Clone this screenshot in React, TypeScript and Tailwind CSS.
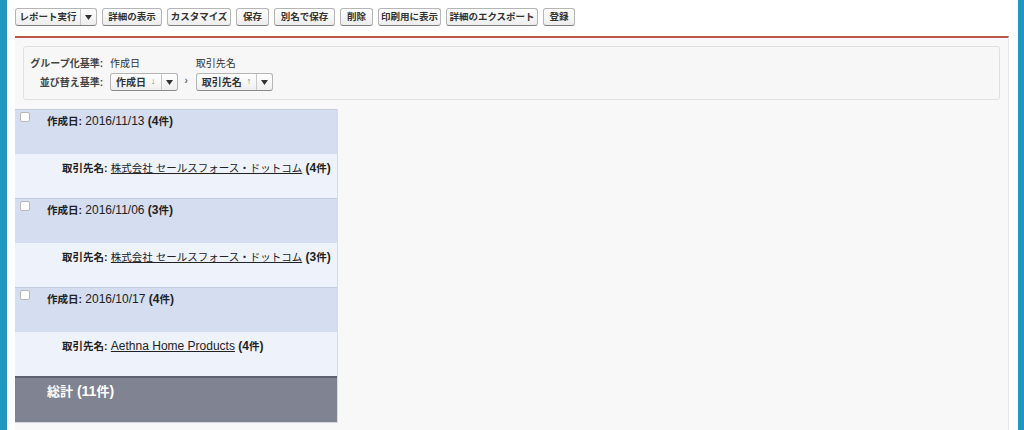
const font = { fontFamily: '"Liberation Sans", "Noto Sans CJK JP", sans-serif' };

const buttons = [
  { label: '詳細の表示', w: 'w-[60px]' },
  { label: 'カスタマイズ', w: 'w-[64px]' },
  { label: '保存', w: 'w-[33px]' },
  { label: '別名で保存', w: 'w-[61px]' },
  { label: '削除', w: 'w-[33px]' },
  { label: '印刷用に表示', w: 'w-[63px]' },
  { label: '詳細のエクスポート', w: 'w-[92px]' },
  { label: '登録', w: 'w-[32px]' },
];

const groups = [
  { date: '2016/11/13', count: 4, account: '株式会社 セールスフォース・ドットコム', jp: true },
  { date: '2016/11/06', count: 3, account: '株式会社 セールスフォース・ドットコム', jp: true },
  { date: '2016/10/17', count: 4, account: 'Aethna Home Products', jp: false },
];

function Caret() {
  return (
    <svg width="7" height="5" viewBox="0 0 7 5">
      <path d="M0 0h7L3.5 5z" fill="#333" />
    </svg>
  );
}

function SortSelect({ label, arrow }: { label: string; arrow: string }) {
  return (
    <div className="flex h-[18px] items-center rounded-[3px] border border-[#b5b5b5] border-b-[#8a8a8a] bg-gradient-to-b from-white to-[#efefef] text-[10px] font-bold text-[#333]">
      <span className="pl-[5px] pr-[5px]">{label}</span>
      <span className="pr-[5px] text-[9px] font-normal text-[#777]">{arrow}</span>
      <span className="flex h-full items-center border-l border-[#c8c8c8] px-[4px]">
        <Caret />
      </span>
    </div>
  );
}

export default function App() {
  return (
    <div className="flex h-[430px] w-full overflow-hidden bg-white" style={font}>
      <div className="w-[7px] shrink-0 bg-[#1f97be]" />
      <div className="flex min-w-0 flex-1 flex-col pl-[8px] pr-[9px] pt-[8px]">
        <div className="flex gap-[5px]">
          <div className="flex h-[18px] w-[82px] items-center whitespace-nowrap rounded-[3px] border border-[#b5b5b5] border-b-[#7f7f7f] bg-gradient-to-b from-white to-[#ededed] text-[9.5px] font-bold text-[#333]">
            <span className="flex-1 text-center">レポート実行</span>
            <span className="flex h-full items-center border-l border-[#c8c8c8] px-[4px]">
              <Caret />
            </span>
          </div>
          {buttons.map((b) => (
            <div
              key={b.label}
              className={`flex h-[18px] items-center justify-center whitespace-nowrap rounded-[3px] border border-[#b5b5b5] border-b-[#7f7f7f] bg-gradient-to-b from-white to-[#ededed] text-[9.5px] font-bold text-[#333] ${b.w}`}
            >
              {b.label}
            </div>
          ))}
        </div>

        <div className="mt-[10px] flex flex-1 flex-col border-t-2 border-r border-t-[#b9574b] border-r-[#e6e6e6] bg-[#f8f8f8]">
          <div className="p-[8px] pb-[9px]">
            <div className="flex h-[54px] items-start rounded-[3px] border border-[#e0e0e0] bg-[#f7f7f7] pt-[10px] text-[10px] text-[#333]">
              <div className="flex w-[79px] flex-col items-end gap-[5px] font-bold text-[#444]">
                <span className="leading-[13px]">グループ化基準:</span>
                <span className="mt-[1px] leading-[13px]">並び替え基準:</span>
              </div>
              <div className="ml-[7px] flex flex-col gap-[3px]">
                <span className="leading-[13px]">作成日</span>
                <SortSelect label="作成日" arrow="↓" />
              </div>
              <span className="ml-[7px] mt-[16px] text-[10px] font-bold text-[#666]">›</span>
              <div className="ml-[8px] flex flex-col gap-[3px]">
                <span className="leading-[13px]">取引先名</span>
                <SortSelect label="取引先名" arrow="↑" />
              </div>
            </div>
          </div>

          <div className="flex w-[323px] flex-col border-r border-[#d8dbe3] text-[12px] text-[#222]">
            {groups.map((g, i) => (
              <div key={i}>
                <div className="flex h-[45px] items-start border-t border-[#c3cbe0] bg-[#d5ddf0]">
                  <div className="ml-[5px] mt-[2px] h-[10px] w-[10px] rounded-[2px] border border-[#b8b8b8] bg-white" />
                  <div className="ml-[17px] mt-[2px] whitespace-nowrap">
                    <span className="text-[10.5px] font-bold">作成日:</span> {g.date}{' '}
                    <span className="font-bold">
                      ({g.count}
                      <span className="text-[10.5px]">件</span>)
                    </span>
                  </div>
                </div>
                <div className="h-[44px] whitespace-nowrap bg-[#eef2fb] pl-[47px] pt-[5px]">
                  <span className="text-[10.5px] font-bold">取引先名:</span>{' '}
                  <span className={`underline ${g.jp ? 'text-[10.5px]' : ''}`}>{g.account}</span>{' '}
                  <span className="font-bold">
                    ({g.count}
                    <span className="text-[10.5px]">件</span>)
                  </span>
                </div>
              </div>
            ))}
            <div className="h-[47px] border-t-2 border-b border-t-[#5e616e] border-b-[#d5d6dc] bg-[#808391] pl-[32px] pt-[3px] text-[14px] font-bold text-white">
              <span className="text-[13px]">総計</span> (11<span className="text-[13px]">件</span>)
            </div>
          </div>
        </div>
      </div>
      <div className="w-[6px] shrink-0 bg-[#1f97be]" />
    </div>
  );
}
